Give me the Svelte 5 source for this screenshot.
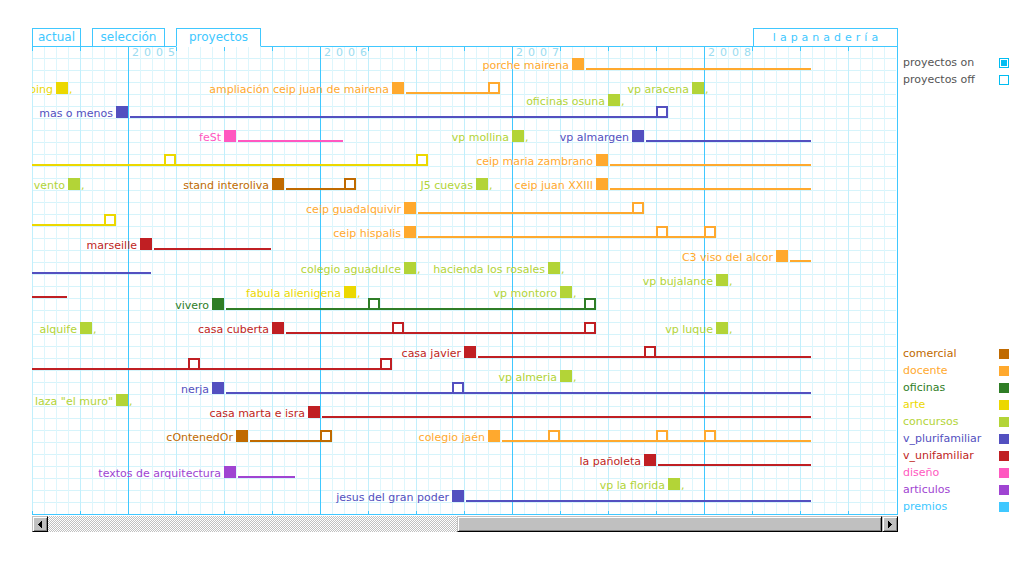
<script>
  const colors = {
    comercial: '#c06a00',
    docente: '#ffa92e',
    oficinas: '#2f7d26',
    arte: '#ecd800',
    concursos: '#b3d437',
    v_plurifamiliar: '#5350c0',
    v_unifamiliar: '#c01f23',
    'diseño': '#ff58c0',
    articulos: '#a044d2',
    premios: '#40c8ff'
  };

  const tabs = [
    { name: 'actual', cells: 4 },
    { name: 'selección', cells: 6 },
    { name: 'proyectos', cells: 7 }
  ];

  const years = [
    { label: '2005', col: 8 },
    { label: '2006', col: 24 },
    { label: '2007', col: 40 },
    { label: '2008', col: 56 }
  ];

  // row, start column (-1: began before the visible range), kind, name, end column, milestones
  const projects = [
    [1, 45, 'docente', 'porche mairena', 65],
    [3, 2, 'arte', 'ping'],
    [3, 30, 'docente', 'ampliación ceip juan de mairena', 39, [38]],
    [3, 55, 'concursos', 'vp aracena'],
    [4, 48, 'concursos', 'oficinas osuna'],
    [5, 7, 'v_plurifamiliar', 'mas o menos', 53, [52]],
    [7, 16, 'diseño', 'feSt', 26],
    [7, 40, 'concursos', 'vp mollina'],
    [7, 50, 'v_plurifamiliar', 'vp almargen', 65],
    [9, -1, 'arte', '', 33, [11, 32]],
    [9, 47, 'docente', 'ceip maria zambrano', 65],
    [11, 3, 'concursos', 'vento'],
    [11, 20, 'comercial', 'stand interoliva', 27, [26]],
    [11, 37, 'concursos', 'J5 cuevas'],
    [11, 47, 'docente', 'ceip juan XXIII', 65],
    [13, 31, 'docente', 'ceip guadalquivir', 51, [50]],
    [14, -1, 'arte', '', 7, [6]],
    [15, 31, 'docente', 'ceip hispalis', 57, [52, 56]],
    [16, 9, 'v_unifamiliar', 'marseille', 20],
    [17, 62, 'docente', 'C3 viso del alcor', 65],
    [18, -1, 'v_plurifamiliar', '', 10],
    [18, 31, 'concursos', 'colegio aguadulce'],
    [18, 43, 'concursos', 'hacienda los rosales'],
    [19, 57, 'concursos', 'vp bujalance'],
    [20, -1, 'v_unifamiliar', '', 3],
    [20, 26, 'arte', 'fabula alienigena'],
    [20, 44, 'concursos', 'vp montoro'],
    [21, 15, 'oficinas', 'vivero', 47, [28, 46]],
    [23, 4, 'concursos', 'alquife'],
    [23, 20, 'v_unifamiliar', 'casa cuberta', 47, [30, 46]],
    [23, 57, 'concursos', 'vp luque'],
    [25, 36, 'v_unifamiliar', 'casa javier', 65, [51]],
    [26, -1, 'v_unifamiliar', '', 30, [13, 29]],
    [27, 44, 'concursos', 'vp almeria'],
    [28, 15, 'v_plurifamiliar', 'nerja', 65, [35]],
    [29, 7, 'concursos', 'laza "el muro"'],
    [30, 23, 'v_unifamiliar', 'casa marta e isra', 65],
    [32, 17, 'comercial', 'cOntenedOr', 25, [24]],
    [32, 38, 'docente', 'colegio jaén', 65, [43, 52, 56]],
    [34, 51, 'v_unifamiliar', 'la pañoleta', 65],
    [35, 16, 'articulos', 'textos de arquitectura', 22],
    [36, 53, 'concursos', 'vp la florida'],
    [37, 35, 'v_plurifamiliar', 'jesus del gran poder', 65]
  ].map(([row, col, kind, name, end, marks = []]) => ({ row, col, kind, name, end, marks }));

  let active = $state('proyectos');
  let show = $state('on');
  let position = $state(100);

  const area = (row, from, to) => `grid-area: ${row + 1} / ${from + 1} / ${row + 2} / ${to + 1}`;
</script>

<main>
  <section class="chart">
    <nav>
      {#each tabs as tab}
        <button
          class="tab"
          class:active={active === tab.name}
          style="width: {tab.cells * 12 + 1}px"
          onclick={() => (active = tab.name)}>{tab.name}</button>
      {/each}
      <a class="tab brand" href="#inicio">lapanadería</a>
    </nav>

    <div class="plot">
      {#each years as year}
        <span class="year" style="grid-column: {year.col + 1} / span 5">{year.label}</span>
      {/each}
      {#each projects as p}
        {#if p.end}
          <i class="line" class:open={p.col < 0} style="{area(p.row, p.col + 1, p.end)}; color: {colors[p.kind]}"></i>
        {/if}
        {#each p.marks as mark}
          <i class="mark" style="{area(p.row, mark, mark + 1)}; color: {colors[p.kind]}"></i>
        {/each}
        {#if p.name}
          <a class="name" href="#proyecto" style="{area(p.row, 0, p.col)}; color: {colors[p.kind]}">{p.name}</a>
          <i class="start" style="{area(p.row, p.col, p.col + 1)}; color: {colors[p.kind]}"></i>
          {#if !p.end}
            <span class="stop" style="{area(p.row, p.col + 1, p.col + 2)}; color: {colors[p.kind]}">,</span>
          {/if}
        {/if}
      {/each}
    </div>

    <div class="scroll">
      <button class="arrow" aria-label="anterior" onclick={() => (position = Math.max(0, position - 10))}>
        <svg width="4" height="7" viewBox="0 0 4 7" shape-rendering="crispEdges"><path d="M4 0v7h-1v-1h-1v-1h-1v-1h-1v-1h1v-1h1v-1h1v-1z" /></svg>
      </button>
      <input type="range" min="0" max="100" bind:value={position} aria-label="desplazar" />
      <button class="arrow" aria-label="siguiente" onclick={() => (position = Math.min(100, position + 10))}>
        <svg width="4" height="7" viewBox="0 0 4 7" shape-rendering="crispEdges"><path d="M0 0v7h1v-1h1v-1h1v-1h1v-1h-1v-1h-1v-1h-1v-1z" /></svg>
      </button>
    </div>
  </section>

  <aside>
    <div class="switches">
      <label>proyectos on <input type="radio" name="show" value="on" bind:group={show} /></label>
      <label>proyectos off <input type="radio" name="show" value="off" bind:group={show} /></label>
    </div>
    <ul>
      {#each Object.entries(colors) as [kind, color]}
        <li style="color: {color}">{kind}<i></i></li>
      {/each}
    </ul>
  </aside>
</main>

<style>
  :global(body) {
    margin: 0;
    background: #fff;
  }

  main {
    --cyan: #40c8ff;
    display: grid;
    grid-template-columns: minmax(0, 1fr) 106px;
    column-gap: 5px;
    padding: 28px 14px 28px 32px;
    font-family: 'DejaVu Sans', Verdana, sans-serif;
    font-size: 11px;
  }

  nav {
    display: flex;
    gap: 11px;
    position: relative;
    margin-bottom: -1px;
  }

  .tab {
    box-sizing: border-box;
    height: 19px;
    padding: 0;
    border: 1px solid var(--cyan);
    background: #fff;
    color: var(--cyan);
    font: inherit;
    font-size: 12px;
    line-height: 17px;
    text-align: center;
    text-decoration: none;
  }

  .tab.active {
    border-bottom-color: #fff;
  }

  .brand {
    width: 145px;
    margin-left: auto;
    padding-left: 4px;
    font-size: 11px;
    letter-spacing: 4px;
  }

  .plot {
    display: grid;
    grid-template-columns: repeat(72, 12px);
    grid-template-rows: repeat(39, 12px);
    padding-bottom: 1px;
    overflow: hidden;
    background:
      linear-gradient(var(--cyan), var(--cyan)) 0 0 / 100% 1px no-repeat,
      linear-gradient(var(--cyan), var(--cyan)) 0 100% / 100% 1px no-repeat,
      linear-gradient(90deg, #fff 1px, var(--cyan) 1px) 100% 0 / 2px 100% no-repeat,
      linear-gradient(90deg, var(--cyan) 1px, transparent 1px) 0 0 / 48px 5px repeat-x,
      linear-gradient(90deg, var(--cyan) 1px, transparent 1px) 0 100% / 48px 4px repeat-x,
      linear-gradient(90deg, #c2effc 1px, transparent 1px) 0 0 / 48px 100%,
      linear-gradient(90deg, #def6fc 1px, transparent 1px) 0 0 / 12px 100%,
      linear-gradient(#d6f4fb 1px, transparent 1px) 0 0 / 100% 12px;
  }

  .year {
    grid-row: 1 / -1;
    padding-left: 3px;
    border-left: 1px solid var(--cyan);
    color: #9adcf0;
    line-height: 13px;
    letter-spacing: 5px;
  }

  .name {
    justify-self: end;
    padding-right: 3px;
    line-height: 16px;
    white-space: nowrap;
    text-decoration: none;
  }

  .stop {
    padding-left: 1px;
    line-height: 16px;
  }

  .start {
    background: currentColor;
  }

  .mark {
    z-index: 1;
    border: 2px solid;
    background: #fff;
  }

  .line {
    align-self: end;
    height: 2px;
    margin: 0 1px 0 2px;
    background: currentColor;
  }

  .line.open {
    margin-left: 0;
  }

  .scroll {
    display: flex;
    height: 16px;
    margin-top: 1px;
    background: repeating-conic-gradient(#c0c0c0 0 25%, #fff 0 50%) 0 0 / 2px 2px;
  }

  .arrow {
    display: grid;
    place-items: center;
    flex: none;
    box-sizing: border-box;
    width: 16px;
    height: 16px;
    padding: 0;
    border: 1px solid;
    border-color: #c0c0c0 #000 #000 #c0c0c0;
    background: #c0c0c0;
    box-shadow: inset 1px 1px #fff, inset -1px -1px #808080;
  }

  .scroll input {
    appearance: none;
    flex: 1;
    min-width: 0;
    height: 16px;
    margin: 0;
    background: none;
  }

  .scroll input::-webkit-slider-thumb {
    appearance: none;
    box-sizing: border-box;
    width: 51%;
    height: 16px;
    border: 1px solid;
    border-color: #c0c0c0 #000 #000 #c0c0c0;
    border-radius: 0;
    background: #c0c0c0;
    box-shadow: inset 1px 1px #fff, inset -1px -1px #808080;
  }

  aside {
    display: flex;
    flex-direction: column;
    justify-content: space-between;
    padding: 26px 0 17px;
    line-height: 17px;
  }

  .switches {
    color: #555;
  }

  label,
  li {
    display: flex;
    align-items: center;
    justify-content: space-between;
    height: 17px;
  }

  label input {
    appearance: none;
    box-sizing: border-box;
    width: 10px;
    height: 10px;
    margin: 0;
    border: 1px solid #00bdf2;
    background: #fff;
  }

  label input:checked {
    background: #00bdf2;
    box-shadow: inset 0 0 0 1px #fff;
  }

  ul {
    margin: 0;
    padding: 0;
    list-style: none;
  }

  li i {
    width: 10px;
    height: 10px;
    background: currentColor;
  }
</style>
